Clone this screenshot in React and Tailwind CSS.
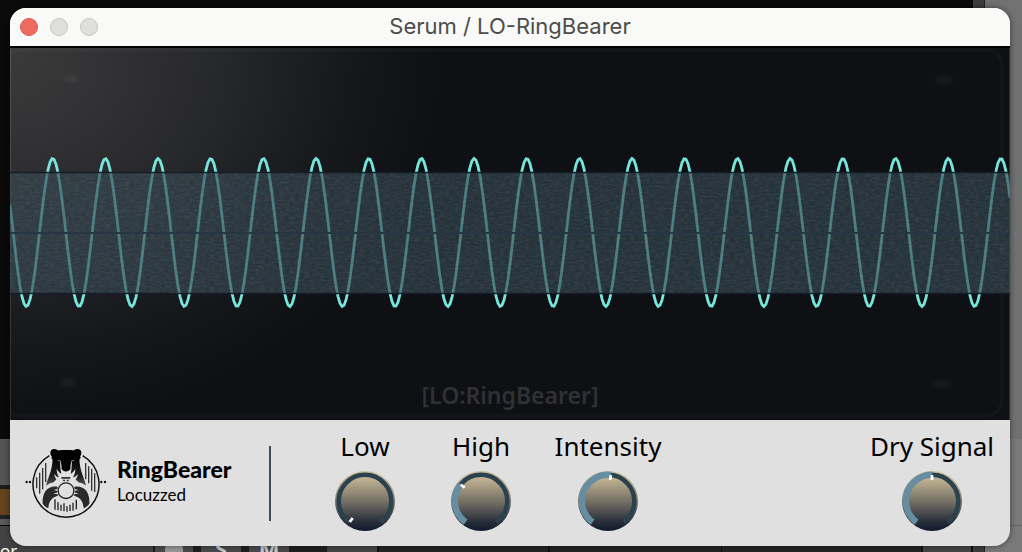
import { useState } from "react";

const PERIOD = 52.68;
const FIRST_PEAK = 42.7;
const wavePath = Array.from({ length: 501 }, (_, i) => {
  const x = i * 2;
  const y = 186.5 - 74 * Math.cos((2 * Math.PI * (x - FIRST_PEAK)) / PERIOD);
  return `${i ? "L" : "M"}${x} ${y.toFixed(2)}`;
}).join("");

const SWEEP = 144;

function polar(radius, degrees) {
  const a = (degrees * Math.PI) / 180;
  return [30 + radius * Math.sin(a), 30 - radius * Math.cos(a)];
}

function arc(radius, from, to) {
  const [x1, y1] = polar(radius, from);
  const [x2, y2] = polar(radius, to);
  return `M${x1} ${y1}A${radius} ${radius} 0 ${to - from > 180 ? 1 : 0} 1 ${x2} ${y2}`;
}

function Knob({ id, label, initial, className }) {
  const [value, setValue] = useState(initial);
  const angle = -SWEEP + (value / 1000) * SWEEP * 2;
  const [px1, py1] = polar(26, angle);
  const [px2, py2] = polar(21, angle);
  return (
    <div className={`flex flex-col items-center ${className}`}>
      <label htmlFor={id} className="mb-[10px] text-[26px] leading-[30px] whitespace-nowrap text-black">
        {label}
      </label>
      <div className="relative size-[60px]">
        <svg viewBox="0 0 60 60" className="block size-full" aria-hidden="true">
          <defs>
            <linearGradient id={`${id}-face`} x1="0" y1="0" x2="0" y2="1">
              <stop offset="0" stopColor="#d0c09b" />
              <stop offset="0.15" stopColor="#bcae90" />
              <stop offset="0.5" stopColor="#777266" />
              <stop offset="0.85" stopColor="#272d39" />
              <stop offset="1" stopColor="#101a2c" />
            </linearGradient>
          </defs>
          <circle cx="30" cy="30" r="30" fill={`url(#${id}-face)`} />
          <path d={arc(26.2, -SWEEP, SWEEP)} fill="none" stroke="#2a414e" strokeWidth="4.4" />
          {value > 0 && <path d={arc(26.2, -SWEEP, angle)} fill="none" stroke="#668da2" strokeWidth="6.4" />}
          <path d={`M${px1} ${py1}L${px2} ${py2}`} stroke="#fff" strokeWidth="2.8" />
        </svg>
        <input
          id={id}
          type="range"
          min="0"
          max="1000"
          value={value}
          onChange={(e) => setValue(Number(e.target.value))}
          className="absolute inset-0 size-full cursor-pointer opacity-0"
        />
      </div>
    </div>
  );
}

function BearLogo() {
  return (
    <svg viewBox="75 84 246 210" className="h-[70px] w-[82px] shrink-0" aria-hidden="true">
      <defs>
        <linearGradient id="fur" x1="0" y1="0" x2="0" y2="1">
          <stop offset="0" stopColor="#000" />
          <stop offset="0.7" stopColor="#222" />
          <stop offset="1" stopColor="#555" />
        </linearGradient>
      </defs>
      <path d="M148 107A99 99 0 1 0 248 107" fill="none" stroke="#111" strokeWidth="4.5" />
      <g fill="#111">
        <circle cx="80" cy="186" r="3.6" />
        <circle cx="90" cy="186" r="3.6" />
        <circle cx="304" cy="186" r="3.6" />
        <circle cx="315" cy="186" r="3.6" />
      </g>
      <path
        d="M110 172V205M119 158V221M128 144V208M137 129V186M257 129V178M266 139V190M275 146V212M284 160V216"
        stroke="#333"
        strokeWidth="4"
        fill="none"
      />
      <path
        d="M158 110C158 132 154 150 148 166C144 178 140 188 138 197C147 191 154 188 161 187C164 183 167 181 169 178C165 173 163 168 163 162C167 168 171 171 177 172C172 164 170 155 170 146C174 153 178 158 184 161C180 146 181 132 180 118Z"
        fill="url(#fur)"
      />
      <path
        d="M238 110C238 132 242 150 248 166C252 178 256 188 258 197C249 191 242 188 235 187C232 183 229 181 227 178C231 173 233 168 233 162C229 168 225 171 219 172C224 164 226 155 226 146C222 153 218 158 212 161C216 146 215 132 216 118Z"
        fill="url(#fur)"
      />
      <circle cx="163" cy="99" r="12" fill="#000" />
      <circle cx="232" cy="99" r="12" fill="#000" />
      <path
        d="M160 94C178 89 218 89 236 94L242 114C237 122 228 125 217 122C212 126 211 136 211 147C207 157 189 157 185 147C185 136 184 126 179 122C168 125 159 122 154 114Z"
        fill="#000"
      />
      <path d="M173 121L184 124M223 121L212 124" stroke="#ccc" strokeWidth="2" />
      <path d="M184 171H211V176H184ZM187 179H195V184H191ZM200 179H208L204 184H200Z" fill="#333" />
      <path
        d="M173 200C158 197 145 202 137 212C129 223 127 238 128 251C132 257 138 262 145 265C146 250 151 236 166 230L176 226L171 222L160 221L173 217L171 212L160 210L173 207Z"
        fill="#2a2a2a"
      />
      <path
        d="M223 200C238 197 251 202 259 212C267 223 269 238 268 251C264 257 258 262 251 265C250 250 245 236 230 230L220 226L225 222L236 221L223 217L225 212L236 210L223 207Z"
        fill="#2a2a2a"
      />
      <circle cx="198" cy="212" r="23.5" fill="#e0e0e0" stroke="#222" strokeWidth="4" />
      <path
        d="M165 238V269M174 247V271M183 254V272M192 250V274M201 259V275M210 254V273M219 248V272M229 239V268"
        stroke="#222"
        strokeWidth="4"
        fill="none"
      />
    </svg>
  );
}

function Scope() {
  return (
    <div className="relative min-h-[240px] flex-1 overflow-hidden border-t-2 border-black bg-[#0e1014]">
      <svg viewBox="0 2 1000 372" preserveAspectRatio="none" className="absolute inset-0 size-full" aria-hidden="true">
        <defs>
          <radialGradient id="glow" gradientUnits="userSpaceOnUse" cx="0" cy="0" r="430" gradientTransform="translate(0 10) scale(1 0.85)">
            <stop offset="0" stopColor="#3a3a3b" />
            <stop offset="0.2" stopColor="#333335" />
            <stop offset="0.5" stopColor="#26272a" />
            <stop offset="0.8" stopColor="#16171b" />
            <stop offset="1" stopColor="#0e1014" />
          </radialGradient>
          <radialGradient id="rivet">
            <stop offset="0" stopColor="#fff" stopOpacity="0.045" />
            <stop offset="0.6" stopColor="#fff" stopOpacity="0.03" />
            <stop offset="1" stopColor="#fff" stopOpacity="0" />
          </radialGradient>
          <filter id="grain" x="0" y="0" width="1" height="1">
            <feTurbulence type="fractalNoise" baseFrequency="0.2 0.5" numOctaves="2" seed="4" />
            <feColorMatrix values="0 0 0 0 0.6  0 0 0 0 0.75  0 0 0 0 0.8  0.5 0 0 0 -0.16" />
          </filter>
        </defs>
        <rect width="1000" height="374" fill="url(#glow)" />
        <rect x="-6" y="4" width="998" height="366" rx="16" fill="none" stroke="#fff" strokeOpacity="0.025" strokeWidth="4" />
        <path d="M0.5 0V374M999.5 0V374" stroke="#fff" strokeOpacity="0.13" />
        <ellipse cx="61" cy="33" rx="10" ry="6" fill="url(#rivet)" />
        <ellipse cx="934" cy="34" rx="11" ry="6" fill="url(#rivet)" />
        <ellipse cx="58" cy="337" rx="11" ry="6" fill="url(#rivet)" />
        <ellipse cx="931" cy="338" rx="11" ry="6" fill="url(#rivet)" />
        <path d={wavePath} fill="none" stroke="#76e6dc" strokeWidth="2.8" />
        <rect y="127" width="1000" height="120" fill="#33444e" fillOpacity="0.66" />
        <rect y="127" width="1000" height="120" filter="url(#grain)" opacity="0.34" />
        <path d="M0 126.5H1000M0 247.5H1000" stroke="#141e2b" strokeWidth="1.6" />
        <path d="M0 187H1000" stroke="#263743" strokeWidth="2" />
      </svg>
      <p className="absolute inset-x-0 bottom-[9px] text-center text-[23px] leading-8 font-semibold text-[#303135]">
        [LO:RingBearer]
      </p>
    </div>
  );
}

function Backdrop() {
  return (
    <div className="absolute inset-0 flex overflow-hidden bg-[#0b0b0b]" aria-hidden="true">
      <div className="flex min-w-0 flex-1 flex-col">
        <div className="flex-1" />
        <div className="h-[46px] bg-[#555]" />
        <div className="h-1 bg-[#1c1c1c]" />
        <div className="h-[26px] bg-[#65431c]" />
        <div className="h-1 bg-[#222]" />
        <div className="h-[6px] bg-[#5a5a5a]" />
        <div className="h-px bg-black" />
        <div className="flex h-[26px] items-end bg-[#252525] text-white">
          <div className="h-full w-[153px] bg-[#434343] pt-[15px] text-[17px] leading-5">or</div>
          <div className="flex h-full w-[174px] gap-2 bg-[#1f1f1f] px-[2px] text-[22px] leading-[44px] font-bold text-[#ccc]">
            <div className="flex h-full w-[38px] items-end justify-center bg-[#4b4b4b]">
              <span className="h-[7px] w-[18px] rounded-t-sm bg-[#999]" />
            </div>
            <div className="h-full w-[40px] bg-[#4b4b4b] text-center">S</div>
            <div className="h-full w-[40px] bg-[#4b4b4b] text-center">M</div>
          </div>
          <div className="h-full w-[50px] bg-[#454545]" />
          <div className="h-full w-[173px] border-x-2 border-[#111]" />
          <div className="h-full w-[172px] border-r border-[#111]" />
          <div className="h-full flex-1" />
          <div className="h-full w-[52px] border-x-2 border-[#111] bg-[#454545]" />
        </div>
      </div>
      <div className="w-[11px] bg-[#3e3e3e]" />
      <div className="w-px bg-[#222]" />
      <div className="flex w-[37px] flex-col bg-[#727272]">
        <div className="flex-1" />
        <div className="h-[86px] bg-[#7a7a7a]" />
        <div className="h-[27px] border-t border-[#666] bg-[#7a7a7a]" />
      </div>
    </div>
  );
}

export default function App() {
  return (
    <div className="relative flex min-h-screen flex-col pt-2 pr-3 pb-[6px] pl-[10px] font-['Noto_Sans',sans-serif]">
      <Backdrop />
      <main className="relative flex flex-1 flex-col overflow-hidden rounded-[16px] bg-[#e0e0e0] shadow-[0_0_6px_rgba(0,0,0,0.5)]">
        <header className="grid h-[38px] grid-cols-[1fr_auto_1fr] items-center bg-[#f9f9f7] px-[10px]">
          <div className="flex gap-3">
            <button type="button" aria-label="Close" className="size-[18px] rounded-full border border-[#d95a4e] bg-[#ed6b5f]" />
            <button type="button" aria-label="Minimize" className="size-[18px] rounded-full border border-[#c5c5c3] bg-[#dfdfdd]" />
            <button type="button" aria-label="Zoom" className="size-[18px] rounded-full border border-[#c5c5c3] bg-[#dfdfdd]" />
          </div>
          <h1 className="pb-[2px] font-['Inter',sans-serif] text-[22px] leading-7 text-[#4c4c4b]">Serum / LO-RingBearer</h1>
        </header>
        <Scope />
        <footer className="flex items-start pt-[11px] pr-4 pb-[15px] pl-[15px]">
          <div className="mt-[17px] flex items-start gap-[10px] font-['Lato',sans-serif] text-black">
            <BearLogo />
            <div className="w-[152px] pt-[7px]">
              <h2 className="text-[23px] leading-7 font-black">RingBearer</h2>
              <p className="text-[17px] leading-6">Locuzzed</p>
            </div>
          </div>
          <div className="mt-[15px] h-[75px] w-[2px] bg-[#3b4c5c]" />
          <div className="ml-9 flex flex-1">
            <Knob id="low" label="Low" initial={0} className="w-[116px]" />
            <Knob id="high" label="High" initial={323} className="w-[116px]" />
            <Knob id="intensity" label="Intensity" initial={521} className="w-[138px]" />
            <Knob id="dry-signal" label="Dry Signal" initial={500} className="ml-auto" />
          </div>
        </footer>
      </main>
    </div>
  );
}
